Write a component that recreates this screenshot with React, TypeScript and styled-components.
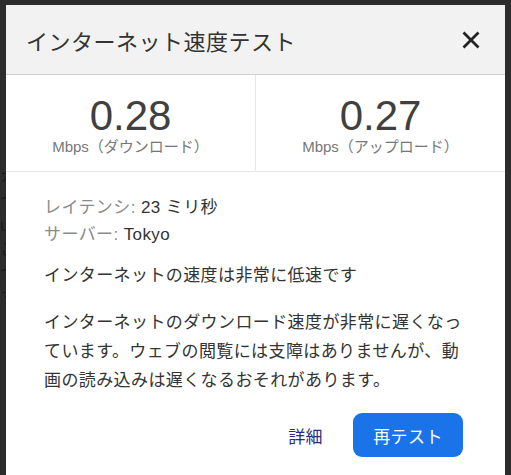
import React from 'react';
import styled, { createGlobalStyle } from 'styled-components';

const GlobalStyle = createGlobalStyle`
  html, body {
    margin: 0;
    padding: 0;
    background: #2c2c2c;
    font-family: 'Liberation Sans', 'Noto Sans CJK JP', sans-serif;
  }
`;

const Page = styled.div`
  position: relative;
  width: 511px;
  height: 475px;
  overflow: hidden;
  background: #2c2c2c;
`;

const Backdrop = styled.div`
  padding-top: 166px;
  color: #1c1c1c;
  font-size: 17px;
  line-height: 24px;
`;

const Dialog = styled.div`
  position: absolute;
  left: 6px;
  top: 5px;
  width: 499px;
  height: 480px;
  background: #ffffff;
  display: flex;
  flex-direction: column;
`;

const Header = styled.div`
  height: 70px;
  box-sizing: border-box;
  background: #f2f2f2;
  border-bottom: 1px solid #d0d0d0;
  display: flex;
  align-items: center;
  justify-content: space-between;
  padding: 0 22px 0 20px;
`;

const Title = styled.h1`
  margin: 0;
  font-size: 22px;
  font-weight: 400;
  letter-spacing: 0.5px;
  color: #333333;
`;

const CloseButton = styled.button`
  border: 0;
  background: transparent;
  padding: 0;
  width: 24px;
  height: 24px;
  display: flex;
  align-items: center;
  justify-content: center;
  cursor: pointer;
`;

const Stats = styled.div`
  display: grid;
  grid-template-columns: 250px 1fr;
  height: 97px;
  box-sizing: border-box;
  border-bottom: 1px solid #e6e6e6;
`;

const Stat = styled.div<{ $divider?: boolean }>`
  display: flex;
  flex-direction: column;
  align-items: center;
  padding-top: 20px;
  border-right: ${({ $divider }) => ($divider ? '1px solid #e6e6e6' : 'none')};
`;

const Value = styled.div`
  font-family: 'Liberation Sans', sans-serif;
  font-size: 42px;
  line-height: 1;
  color: #404040;
`;

const Unit = styled.div`
  font-size: 15px;
  line-height: 18px;
  margin-top: 1px;
  color: #777777;
`;

const Body = styled.div`
  padding: 22px 42px 0 38px;
  color: #333333;
  font-size: 17px;
  letter-spacing: 0.4px;
`;

const Meta = styled.div`
  line-height: 27px;
`;

const MetaLabel = styled.span`
  color: #8a8a8a;
`;

const Status = styled.p`
  margin: 13px 0 0;
  line-height: 29px;
`;

const Description = styled.p`
  margin: 18px 0 0;
  line-height: 29px;
`;

const Actions = styled.div`
  display: flex;
  justify-content: flex-end;
  align-items: center;
  gap: 30px;
  margin-top: 18px;
`;

const DetailsLink = styled.a`
  color: #2b2a85;
  text-decoration: none;
  font-size: 17px;
  cursor: pointer;
`;

const RetestButton = styled.button`
  width: 110px;
  height: 44px;
  border: 0;
  border-radius: 9px;
  background: #1a73e8;
  color: #ffffff;
  font-family: inherit;
  font-size: 17px;
  letter-spacing: 0.4px;
  cursor: pointer;
`;

const App = () => {
  return (
    <Page>
      <GlobalStyle />
      <Backdrop>
        <div>オ</div>
        <div>つ</div>
        <div>u</div>
        <div>こ</div>
        <div>つ</div>
        <div>す</div>
      </Backdrop>
      <Dialog>
        <Header>
          <Title>インターネット速度テスト</Title>
          <CloseButton aria-label='閉じる'>
            <svg width='20' height='20' viewBox='0 0 20 20'>
              <path
                d='M2.5 2.5 L17.5 17.5 M17.5 2.5 L2.5 17.5'
                stroke='#222'
                strokeWidth='2.8'
              />
            </svg>
          </CloseButton>
        </Header>
        <Stats>
          <Stat $divider>
            <Value>0.28</Value>
            <Unit>Mbps（ダウンロード）</Unit>
          </Stat>
          <Stat>
            <Value>0.27</Value>
            <Unit>Mbps（アップロード）</Unit>
          </Stat>
        </Stats>
        <Body>
          <Meta>
            <MetaLabel>レイテンシ:</MetaLabel> 23 ミリ秒
          </Meta>
          <Meta>
            <MetaLabel>サーバー:</MetaLabel> Tokyo
          </Meta>
          <Status>インターネットの速度は非常に低速です</Status>
          <Description>
            インターネットのダウンロード速度が非常に遅くなっています。ウェブの閲覧には支障はありませんが、動画の読み込みは遅くなるおそれがあります。
          </Description>
          <Actions>
            <DetailsLink>詳細</DetailsLink>
            <RetestButton>再テスト</RetestButton>
          </Actions>
        </Body>
      </Dialog>
    </Page>
  );
};

export default App;
